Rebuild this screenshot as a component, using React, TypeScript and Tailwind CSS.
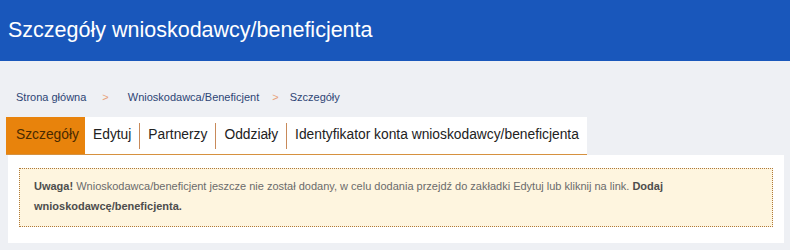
import React from "react";

export default function App() {
  const font = { fontFamily: '"Liberation Sans", Arial, sans-serif' };
  const tabs = ["Edytuj", "Partnerzy", "Oddziały", "Identyfikator konta wnioskodawcy/beneficjenta"];
  return (
    <div className="w-[790px] h-[250px] bg-[#eef0f4] overflow-hidden" style={font}>
      <div className="h-[61px] bg-[#1957bb] flex items-center px-[8px]">
        <h1 className="text-white text-[21.5px] leading-none">Szczegóły wnioskodawcy/beneficjenta</h1>
      </div>
      <div className="px-[16px] pt-[28px] h-[56px] text-[11px] text-[#2d4575] flex items-start">
        <span>Strona główna</span>
        <span className="text-[#e8a27a] ml-[16px] mr-[19px]">&gt;</span>
        <span>Wnioskodawca/Beneficjent</span>
        <span className="text-[#e8a27a] ml-[13px] mr-[11px]">&gt;</span>
        <span>Szczegóły</span>
      </div>
      <div className="pl-[6px]">
        <div className="flex w-fit bg-white border-b border-[#d6913f] h-[38px]">
          <div className="bg-[#e8830c] text-[#4a2a00] text-[13.8px] px-[10px] flex items-center w-[79px]">Szczegóły</div>
          {tabs.map((t, i) => (
            <div key={t} className="flex items-center">
              {i > 0 && <div className="w-px h-[26px] bg-[#c88a5a]" />}
              <div className="px-[8px] text-[13.8px] text-[#222] flex items-center">{t}</div>
            </div>
          ))}
        </div>
      </div>
      <div className="mx-[8px] mr-[6px] bg-white h-[88px] px-[11px] pt-[13px]">
        <div className="bg-[#fef5df] border border-dotted border-[#b07a3a] h-[59px] px-[14px] pt-[7px] text-[11px] leading-[20px] text-[#6b6b6b]">
          <b className="text-[#4d4d4d]">Uwaga!</b> Wnioskodawca/beneficjent jeszcze nie został dodany, w celu dodania przejdź do zakładki Edytuj lub kliknij na link.{" "}
          <b className="text-[#4d4d4d]">Dodaj</b>
          <br />
          <b className="text-[#4d4d4d]">wnioskodawcę/beneficjenta.</b>
        </div>
      </div>
    </div>
  );
}
